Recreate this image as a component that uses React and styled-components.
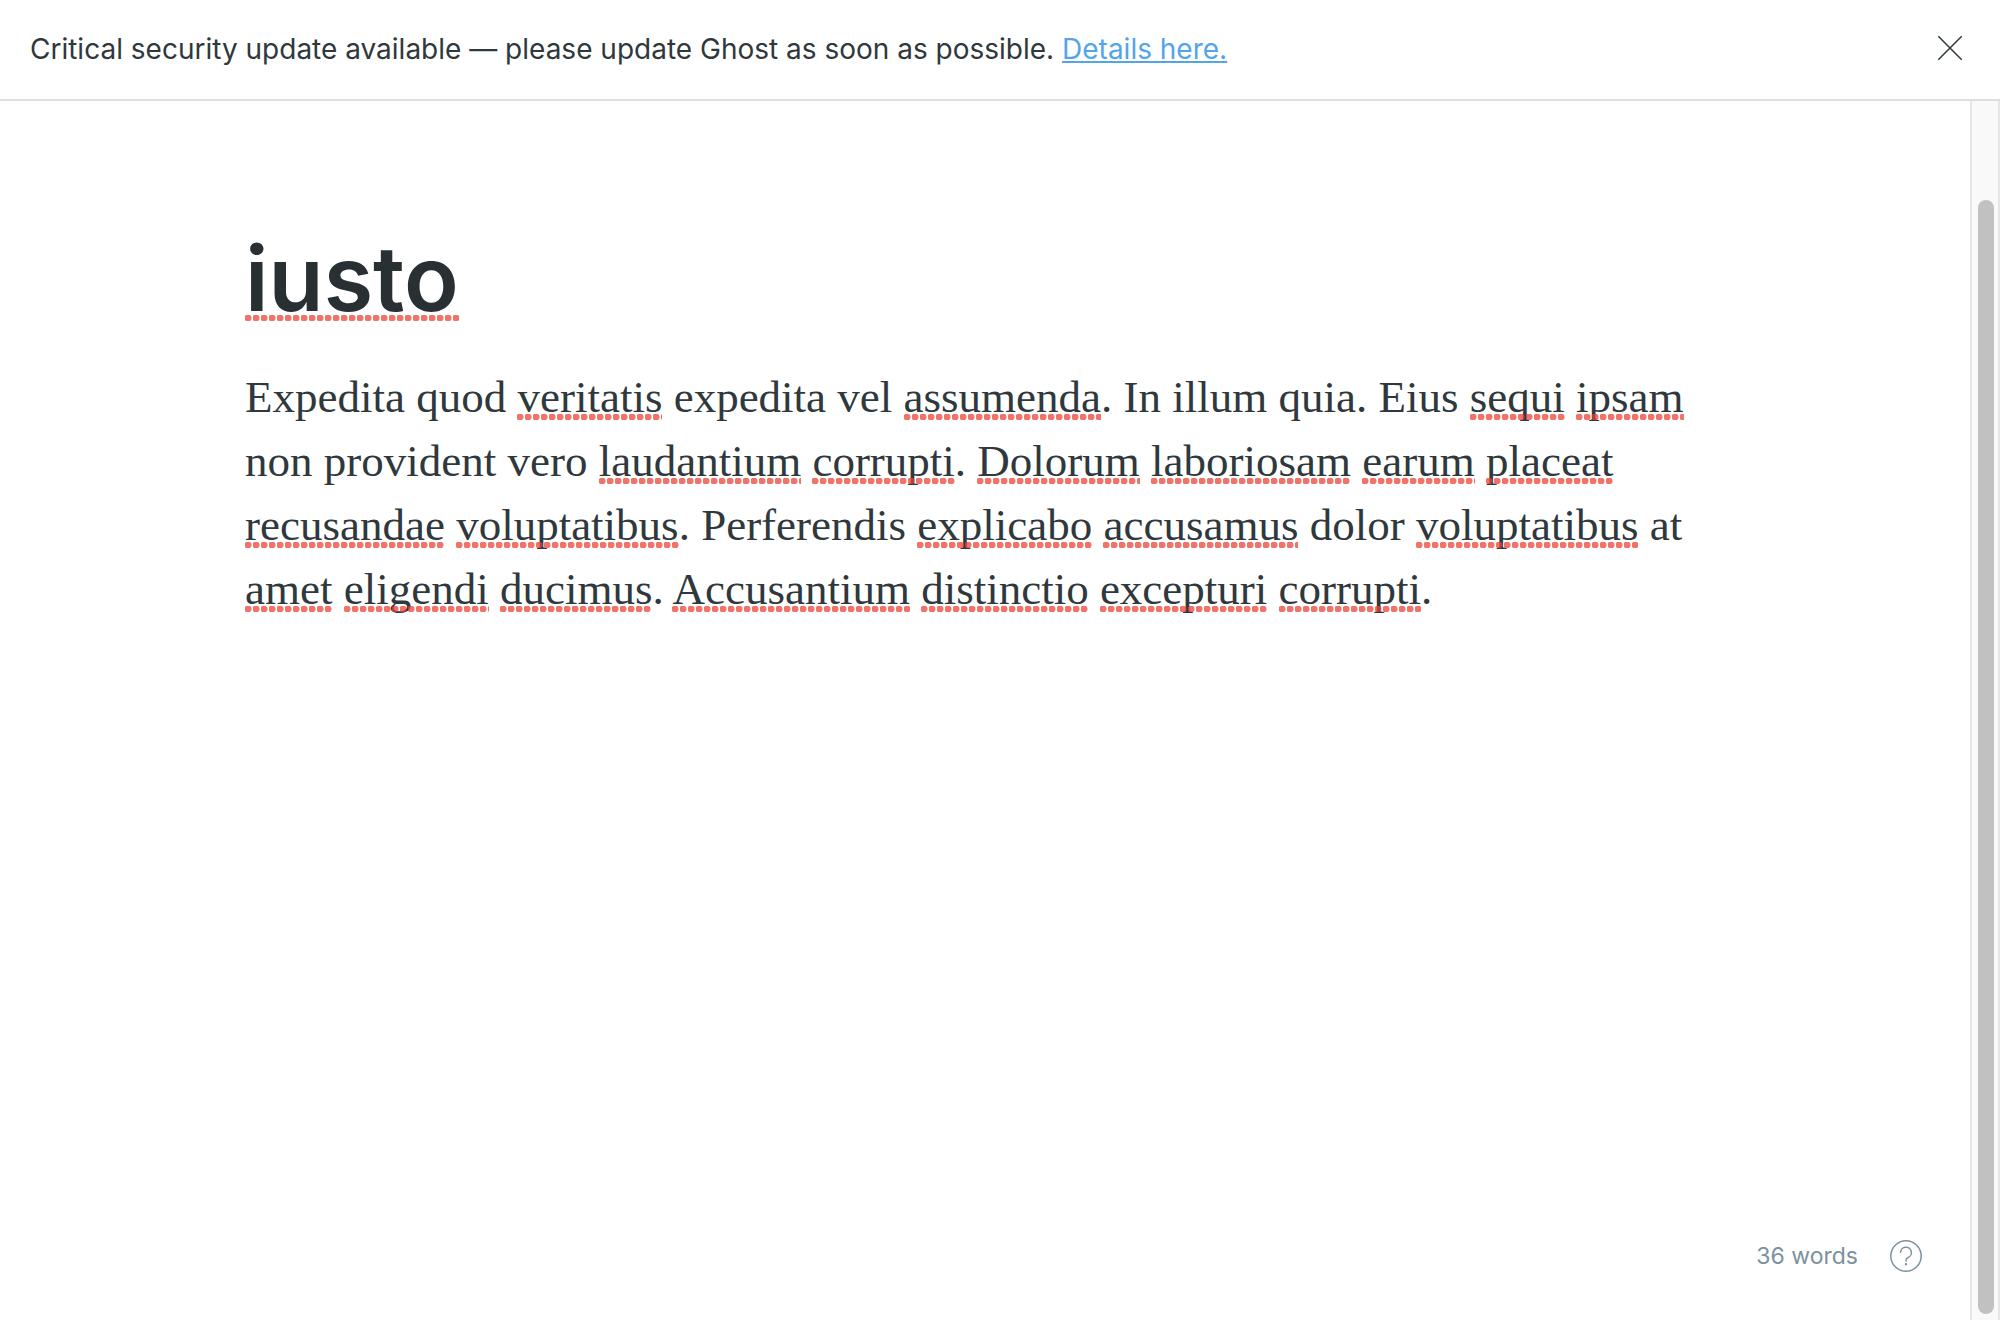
import React from "react";
import styled, { createGlobalStyle } from "styled-components";

const GlobalStyle = createGlobalStyle`
  *, *::before, *::after { box-sizing: border-box; }
  body {
    margin: 0;
    background: #fff;
    color: #2f383c;
    font-family: Inter, "Liberation Sans", sans-serif;
  }
`;

const Page = styled.div`
  display: flex;
  flex-direction: column;
  height: 100vh;
`;

const Banner = styled.aside`
  display: flex;
  align-items: flex-start;
  justify-content: space-between;
  padding: 28px 36px 28px 30px;
  border-bottom: 2px solid #dddfdf;
`;

const BannerText = styled.p`
  margin: 0;
  font-size: 28px;
  line-height: 43px;
`;

const BannerLink = styled.a`
  color: #54a5e8;
  text-decoration: underline;
  text-decoration-thickness: 2px;
  text-underline-offset: 2px;
  text-decoration-skip-ink: none;
`;

const IconButton = styled.button`
  display: flex;
  padding: 0;
  border: 0;
  background: none;
  color: ${(p) => p.$color};
  cursor: pointer;
`;

const CloseButton = styled(IconButton)`
  padding: 6px 0;
`;

const Workspace = styled.div`
  display: flex;
  flex: 1;
  min-height: 0;
`;

const Editor = styled.main`
  display: flex;
  flex: 1;
  flex-direction: column;
`;

const Post = styled.article`
  flex: 1;
  width: 100%;
  max-width: 1480px;
  margin: 0 auto;
  padding-top: 126px;
`;

const Title = styled.h1`
  margin: 0 0 34px;
  color: #283034;
  font-size: 90px;
  font-weight: 600;
  line-height: 104px;
  outline: none;
`;

const Paragraph = styled.p`
  margin: 0;
  font-family: "Liberation Serif", serif;
  font-size: 45px;
  line-height: 64px;
  outline: none;
`;

const Misspelled = styled.span`
  position: relative;

  &::after {
    content: "";
    position: absolute;
    right: 0;
    bottom: ${(p) => (p.$large ? 12 : 2)}px;
    left: 0;
    height: 6px;
    background: radial-gradient(circle at 3px 3px, #eb4034 0 3px, transparent 4px) 0 0 / 8px 6px repeat-x;
    opacity: 0.74;
    pointer-events: none;
  }
`;

const Status = styled.footer`
  display: flex;
  align-items: center;
  justify-content: flex-end;
  gap: 32px;
  padding: 0 48px 48px;
  color: #7c919e;
  font-size: 23px;
  line-height: 32px;
`;

const Scrollbar = styled.div`
  display: flex;
  width: 30px;
  padding: 99px 4px 6px 6px;
  border: solid #e6e6e6;
  border-width: 0 2px;
  background: #f9f9f9;
`;

const Thumb = styled.div`
  flex: 1;
  border-radius: 8px;
  background: #c1c1c1;
`;

const flagged = new Set(
  `veritatis assumenda sequi ipsam laudantium corrupti Dolorum laboriosam earum
  placeat recusandae voluptatibus explicabo accusamus amet eligendi ducimus
  Accusantium distinctio excepturi`.split(/\s+/)
);

const body =
  "Expedita quod veritatis expedita vel assumenda. In illum quia. Eius sequi ipsam non provident vero laudantium corrupti. Dolorum laboriosam earum placeat recusandae voluptatibus. Perferendis explicabo accusamus dolor voluptatibus at amet eligendi ducimus. Accusantium distinctio excepturi corrupti.";

function SpellChecked({ text }) {
  return text
    .split(/(\w+)/)
    .map((part, i) => (flagged.has(part) ? <Misspelled key={i}>{part}</Misspelled> : part));
}

export default function App() {
  return (
    <>
      <GlobalStyle />
      <Page>
        <Banner>
          <BannerText>
            Critical security update available — please update Ghost as soon as possible.{" "}
            <BannerLink href="#details">Details here.</BannerLink>
          </BannerText>
          <CloseButton type="button" aria-label="Dismiss" $color="#2f383c">
            <svg width="28" height="28" viewBox="0 0 28 28" fill="none" stroke="currentColor" strokeWidth="1.5">
              <path d="M2.3 2.3 25.7 25.7M25.7 2.3 2.3 25.7" />
            </svg>
          </CloseButton>
        </Banner>
        <Workspace>
          <Editor>
            <Post>
              <Title contentEditable suppressContentEditableWarning spellCheck={false}>
                <Misspelled $large>iusto</Misspelled>
              </Title>
              <Paragraph contentEditable suppressContentEditableWarning spellCheck={false}>
                <SpellChecked text={body} />
              </Paragraph>
            </Post>
            <Status>
              <span>36 words</span>
              <IconButton type="button" aria-label="Help" $color="#7c919e">
                <svg width="32" height="32" viewBox="0 0 32 32" fill="none" stroke="currentColor" strokeWidth="1.5">
                  <circle cx="16" cy="16" r="15.2" />
                  <path d="M10.6 12.9a5.4 5.4 0 1 1 7.6 4.6c-1.4.7-2.2 1.5-2.2 3v.9" />
                  <path d="M16 23.2v2.1" strokeWidth="2" />
                </svg>
              </IconButton>
            </Status>
          </Editor>
          <Scrollbar aria-hidden="true">
            <Thumb />
          </Scrollbar>
        </Workspace>
      </Page>
    </>
  );
}
